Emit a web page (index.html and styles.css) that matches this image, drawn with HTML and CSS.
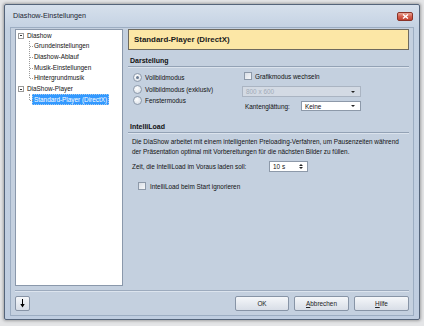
FILE: index.html
```html
<!DOCTYPE html>
<html lang="de">
<head>
<meta charset="utf-8">
<title>Diashow-Einstellungen</title>
<link rel="stylesheet" href="styles.css">
</head>
<body>
<div class="screen">
  <div class="window">
    <div class="titlebar">
      <span class="title">Diashow-Einstellungen</span>
      <span class="close"><svg width="7" height="5" viewBox="0 0 7 5"><path d="M1 0.5 L6 4.5 M6 0.5 L1 4.5" stroke="#fff" stroke-width="1.4"/></svg></span>
    </div>
    <div class="client">
      <div class="main">
        <div class="tree">
          <div class="node root"><span class="exp"></span><span class="label">Diashow</span></div>
          <div class="children">
            <div class="node child"><span class="label">Grundeinstellungen</span></div>
            <div class="node child"><span class="label">Diashow-Ablauf</span></div>
            <div class="node child"><span class="label">Musik-Einstellungen</span></div>
            <div class="node child"><span class="label">Hintergrundmusik</span></div>
          </div>
          <div class="node root"><span class="exp"></span><span class="label">DiaShow-Player</span></div>
          <div class="children">
            <div class="node child"><span class="label selected">Standard-Player (DirectX)</span></div>
          </div>
        </div>
        <div class="panel">
          <div class="panel-header">Standard-Player (DirectX)</div>
          <div class="section-title">Darstellung</div>
          <div class="options">
            <div class="opt-left">
              <div class="radio-row"><span class="radio checked"></span><span>Vollbildmodus</span></div>
              <div class="radio-row"><span class="radio"></span><span>Vollbildmodus (exklusiv)</span></div>
              <div class="radio-row"><span class="radio"></span><span>Fenstermodus</span></div>
            </div>
            <div class="opt-right">
              <div class="check-row"><span class="checkbox"></span><span>Grafikmodus wechseln</span></div>
              <div class="combo disabled wide"><span>800 x 600</span><span class="arrow"></span></div>
              <div class="combo-row">
                <span class="combo-label">Kantenglättung:</span>
                <div class="combo small"><span>Keine</span><span class="arrow"></span></div>
              </div>
            </div>
          </div>
          <div class="section-title">IntelliLoad</div>
          <p class="desc">Die DiaShow arbeitet mit einem intelligenten Preloading-Verfahren, um Pausenzeiten während<br>der Präsentation optimal mit Vorbereitungen für die nächsten Bilder zu füllen.</p>
          <div class="time-row">
            <span class="time-label">Zeit, die IntelliLoad im Voraus laden soll:</span>
            <div class="spin"><span>10 s</span><span class="spin-btns"><span class="up"></span><span class="down"></span></span></div>
          </div>
          <div class="check-row ignore"><span class="checkbox"></span><span>IntelliLoad beim Start ignorieren</span></div>
        </div>
      </div>
      <div class="footer">
        <button class="btn icon-btn"><svg width="5" height="9" viewBox="0 0 5 9"><path d="M2.5 0 V6" stroke="#000" stroke-width="1"/><path d="M0.3 5 H4.7 L2.5 8.6 Z" fill="#000"/></svg></button>
        <div class="btn-group">
          <button class="btn btn-ok">OK</button>
          <button class="btn"><u>A</u>bbrechen</button>
          <button class="btn"><u>H</u>ilfe</button>
        </div>
      </div>
    </div>
  </div>
</div>
</body>
</html>
```

FILE: styles.css
```css
* {
  box-sizing: border-box;
  margin: 0;
  padding: 0;
}

html, body {
  width: 424px;
  height: 326px;
  overflow: hidden;
}

body {
  background: #e4e5e7;
  font-family: "Liberation Sans", Arial, sans-serif;
  font-size: 6.4px;
  color: #111;
}

.screen {
  padding: 4px;
}

.window {
  width: 416px;
  height: 316px;
  border: 1px solid #54647a;
  border-radius: 2px;
  background: linear-gradient(#d6e0ec, #c3d1e2 24px, #bfcde0);
  padding: 0 5px 3px 5px;
  box-shadow: 0 0 3px 1px rgba(0, 0, 0, 0.3);
  display: flex;
  flex-direction: column;
}

.titlebar {
  height: 22px;
  display: flex;
  justify-content: space-between;
  align-items: flex-start;
  padding-left: 3px;
}

.title {
  font-size: 7.2px;
  color: #1c2633;
  margin-top: 6px;
}

.close {
  margin-top: 7px;
  margin-right: 1px;
  width: 16px;
  height: 9px;
  border: 1px solid #8a3328;
  border-radius: 2px;
  background: linear-gradient(#e9a595, #d4604f 50%, #c2412f);
  display: flex;
  align-items: center;
  justify-content: center;
}

.client {
  flex: 1;
  border: 1px solid #9cadc2;
  background: #c4d0df;
  padding: 1px 4px 0 4px;
  display: flex;
  flex-direction: column;
}

.main {
  height: 257px;
  display: flex;
  gap: 5px;
}

/* Tree */
.tree {
  width: 108px;
  background: #fff;
  border: 1px solid #8a98ab;
  padding-top: 0.5px;
}

.node {
  height: 10.65px;
  display: flex;
  align-items: center;
  position: relative;
}

.root {
  padding-left: 2px;
}

.exp {
  width: 6px;
  height: 6px;
  border: 1px solid #9a9a9a;
  background: #fff;
  position: relative;
  margin-right: 1px;
}

.exp::after {
  content: "";
  position: absolute;
  left: 1px;
  top: 1.5px;
  width: 2px;
  height: 1px;
  background: #333;
}

.label {
  padding: 0 2px;
  line-height: 10px;
  white-space: nowrap;
}

.children {
  position: relative;
}

.children::before {
  content: "";
  position: absolute;
  left: 13px;
  top: 0;
  bottom: 5.3px;
  border-left: 1px dotted #9c9c9c;
}

.child {
  padding-left: 16px;
}

.child::before {
  content: "";
  position: absolute;
  left: 14px;
  top: 5.3px;
  width: 3px;
  border-top: 1px dotted #9c9c9c;
}

.selected {
  background: #3399ff;
  color: #fff;
  outline: 1px dotted #a0c8f0;
  outline-offset: -1px;
  line-height: 11px;
}

/* Panel */
.panel {
  flex: 1;
  display: flex;
  flex-direction: column;
}

.panel-header {
  height: 21px;
  border: 1px solid #6e6a5f;
  background: #fce7a6;
  font-weight: bold;
  font-size: 7.9px;
  padding-left: 5px;
  display: flex;
  align-items: center;
  color: #1a1a1a;
}

.section-title {
  margin-top: 5px;
  height: 12px;
  line-height: 11px;
  font-weight: bold;
  font-size: 7px;
  padding-left: 2px;
  border-bottom: 1px solid #93a2b5;
  box-shadow: 0 1px 0 #dbe3ed;
}

.options {
  height: 49px;
  display: flex;
}

.opt-left {
  width: 109px;
  margin-left: 5px;
  padding-top: 5px;
}

.radio-row {
  height: 11.5px;
  display: flex;
  align-items: center;
  gap: 3px;
}

.radio {
  width: 9px;
  height: 9px;
  border-radius: 50%;
  border: 1px solid #8d9aab;
  background: radial-gradient(circle at 40% 35%, #ffffff, #dfe4eb 70%, #cdd4de);
  position: relative;
}

.radio.checked::after {
  content: "";
  position: absolute;
  left: 2px;
  top: 2px;
  width: 3px;
  height: 3px;
  border-radius: 50%;
  background: #6c7d94;
}

.opt-right {
  width: 120px;
  padding-top: 4px;
}

.check-row {
  height: 10px;
  display: flex;
  align-items: center;
  gap: 3px;
  margin-left: 2px;
}

.checkbox {
  width: 8px;
  height: 8px;
  border: 1px solid #8d99a9;
  background: linear-gradient(135deg, #d9dee6, #f7f8fa);
}

.combo {
  height: 11px;
  border: 1px solid #8d99a9;
  background: #fff;
  display: flex;
  align-items: center;
  justify-content: space-between;
  padding: 0 5px 0 3px;
}

.combo.wide {
  margin-top: 5px;
  width: 119px;
}

.combo.disabled {
  background: #d3dae4;
  border-color: #aab4c2;
  color: #a2abb7;
}

.arrow {
  width: 0;
  height: 0;
  border-left: 2px solid transparent;
  border-right: 2px solid transparent;
  border-top: 2px solid #222;
}

.combo-row {
  margin-top: 4px;
  height: 10px;
  display: flex;
  align-items: center;
}

.combo-label {
  width: 59px;
  padding-left: 3px;
}

.combo.small {
  width: 60px;
  height: 10px;
}

.desc {
  margin-top: 4px;
  padding-left: 4px;
  line-height: 10px;
  white-space: nowrap;
}

.time-row {
  margin-top: 4px;
  height: 11px;
  display: flex;
  align-items: center;
  padding-left: 4px;
}

.time-label {
  width: 137px;
}

.spin {
  width: 39px;
  height: 11px;
  border: 1px solid #8d99a9;
  background: #fff;
  display: flex;
  align-items: center;
  justify-content: space-between;
  padding: 0 4px 0 3px;
}

.spin-btns {
  display: flex;
  flex-direction: column;
  gap: 1px;
}

.up {
  width: 0;
  height: 0;
  border-left: 2px solid transparent;
  border-right: 2px solid transparent;
  border-bottom: 2px solid #222;
}

.down {
  width: 0;
  height: 0;
  border-left: 2px solid transparent;
  border-right: 2px solid transparent;
  border-top: 2px solid #222;
}

.check-row.ignore {
  margin-top: 9px;
  margin-left: 10px;
  gap: 4px;
}

/* Footer */
.footer {
  margin-top: 4px;
  border-top: 1px solid #9dabbe;
  box-shadow: inset 0 1px 0 #dce4ee;
  padding-top: 5px;
  display: flex;
  justify-content: space-between;
  align-items: flex-start;
}

.btn-group {
  display: flex;
  gap: 5px;
}

.btn {
  width: 55px;
  height: 15px;
  border: 1px solid #8794a6;
  border-radius: 2px;
  background: linear-gradient(#f5f7fa, #e6eaf0 50%, #d8dee7);
  font-family: "Liberation Sans", Arial, sans-serif;
  font-size: 6.4px;
  color: #222;
  display: flex;
  align-items: center;
  justify-content: center;
}

.btn-ok {
  width: 54px;
}

.icon-btn {
  width: 15px;
}
```
